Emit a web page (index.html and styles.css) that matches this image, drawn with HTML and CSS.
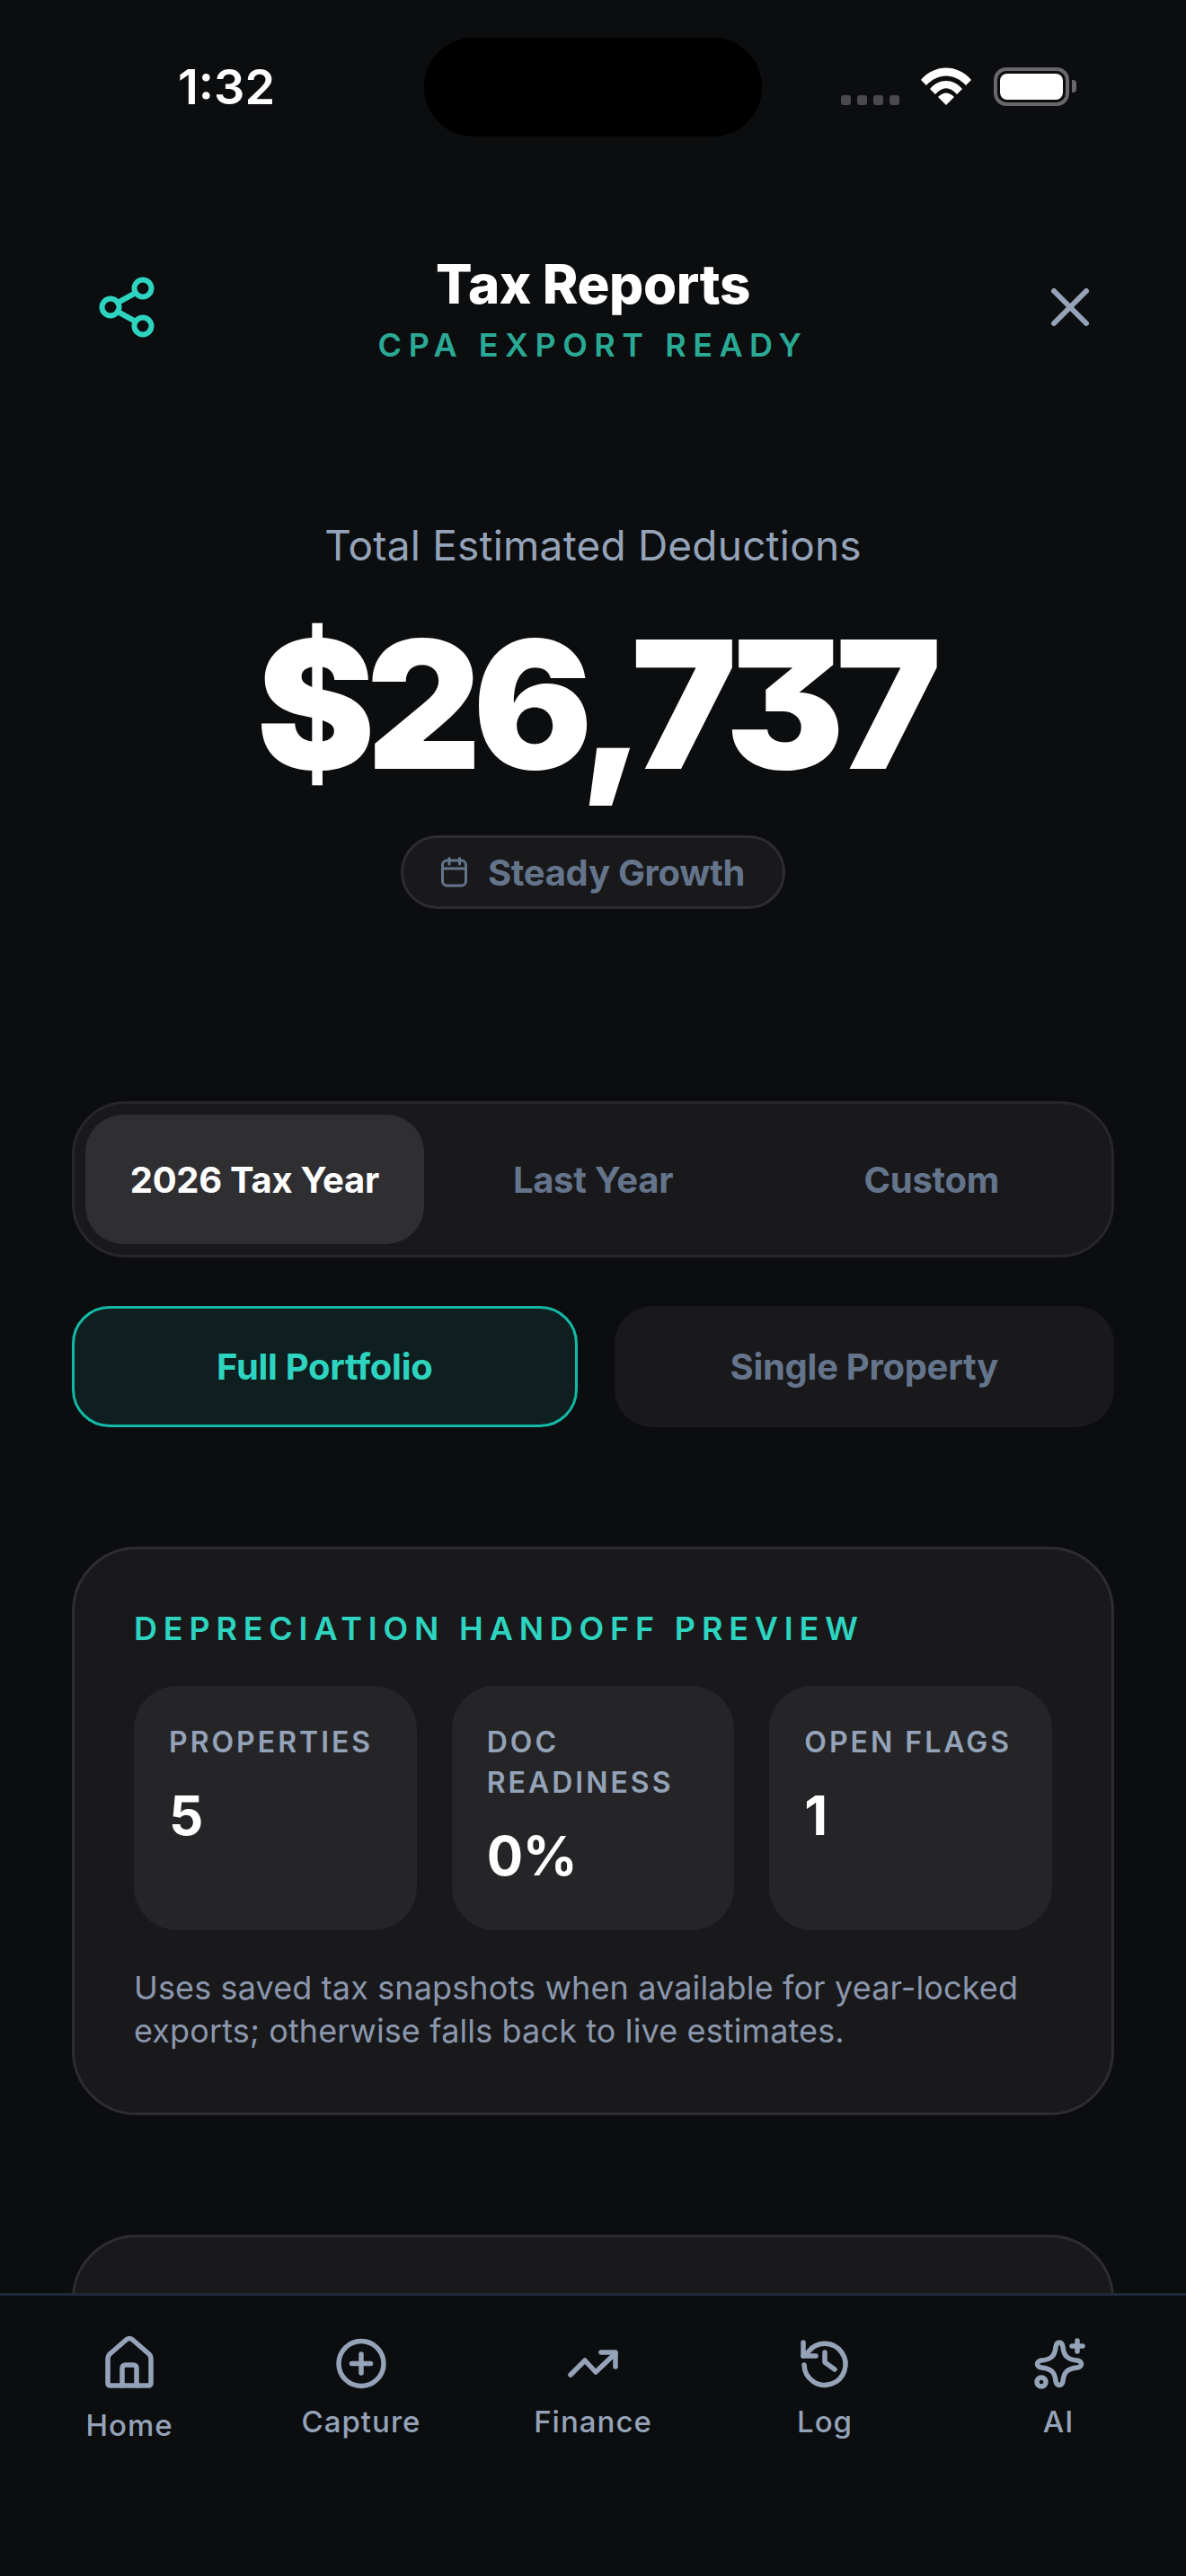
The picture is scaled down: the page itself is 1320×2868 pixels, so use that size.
FILE: index.html
```html
<!DOCTYPE html>
<html lang="en">

<head>
    <meta charset="UTF-8">
    <meta name="viewport" content="width=device-width, initial-scale=1.0">
    <title>Tax Reports</title>
    <link rel="stylesheet" href="styles.css">
</head>

<body>

    <div class="phone">
        <div class="status">
            <span class="time">1:32</span>
            <div class="island"></div>
            <div class="status-icons">
                <div class="signal"><i></i><i></i><i></i><i></i></div>
                <svg class="wifi" width="58" height="42" viewBox="0 0 58 42">
                    <path d="M1 14 C16 -4 42 -4 57 14 L51 20 C38 6 20 6 7 20 Z" />
                    <path d="M11 24 C21 12 37 12 47 24 L41 30 C33 21 25 21 17 30 Z" />
                    <path d="M20 33 C26 27 32 27 38 33 L29 42 Z" />
                </svg>
                <div class="battery"><div class="battery-fill"></div></div>
                <div class="battery-cap"></div>
            </div>
        </div>

        <div class="content">
            <div class="topbar">
                <svg class="share" width="72" height="72" viewBox="0 0 72 72" fill="none">
                    <circle cx="54" cy="15" r="9.5" />
                    <circle cx="18" cy="36" r="9.5" />
                    <circle cx="54" cy="57" r="9.5" />
                    <path d="M26 31 L46 20 M26 41 L46 52" />
                </svg>
                <div class="titles">
                    <h1>Tax Reports</h1>
                    <p>CPA EXPORT READY</p>
                </div>
                <svg class="close" width="48" height="48" viewBox="0 0 48 48" fill="none">
                    <path d="M6 6 L42 42 M42 6 L6 42" />
                </svg>
            </div>

            <div class="hero">
                <p class="hero-label">Total Estimated Deductions</p>
                <div class="hero-value">$26,737</div>
                <div class="pill">
                    <svg width="30" height="34" viewBox="0 0 30 34" fill="none">
                        <rect x="1.5" y="4" width="26" height="28" rx="5" />
                        <path d="M1.5 13 H27.5 M9 1.5 V8 M20.5 1.5 V8" />
                    </svg>
                    <span>Steady Growth</span>
                </div>
            </div>

            <div class="years">
                <div class="year active">2026 Tax Year</div>
                <div class="year">Last Year</div>
                <div class="year">Custom</div>
            </div>

            <div class="scope">
                <div class="scope-btn active">Full Portfolio</div>
                <div class="scope-btn">Single Property</div>
            </div>

            <div class="card">
                <h2>DEPRECIATION HANDOFF PREVIEW</h2>
                <div class="stats">
                    <div class="stat">
                        <div class="stat-label">PROPERTIES</div>
                        <div class="stat-value">5</div>
                    </div>
                    <div class="stat">
                        <div class="stat-label">DOC READINESS</div>
                        <div class="stat-value">0%</div>
                    </div>
                    <div class="stat">
                        <div class="stat-label">OPEN FLAGS</div>
                        <div class="stat-value">1</div>
                    </div>
                </div>
                <p class="note">Uses saved tax snapshots when available for year-locked exports; otherwise falls back to live estimates.</p>
            </div>

            <div class="card next"></div>
        </div>

        <div class="nav">
            <div class="nav-item home">
                <svg width="72" height="72" viewBox="0 0 72 72" fill="none">
                    <path d="M12 31 Q12 28 14 26 L33 9.5 Q36 7.5 39 9.5 L58 26 Q60 28 60 31 V58 Q60 61 57 61 H15 Q12 61 12 58 Z" />
                    <path d="M28 61 V42 Q28 38 32 38 H40 Q44 38 44 42 V61" />
                </svg>
                <span>Home</span>
            </div>
            <div class="nav-item">
                <svg width="72" height="72" viewBox="0 0 72 72" fill="none">
                    <circle cx="36" cy="36.5" r="25" />
                    <path d="M36 26 V47 M25.5 36.5 H46.5" />
                </svg>
                <span>Capture</span>
            </div>
            <div class="nav-item">
                <svg width="72" height="72" viewBox="0 0 72 72" fill="none">
                    <path d="M11 49 L27 33 L39 46 L61 25" />
                    <path d="M45 24 H61 V40" />
                </svg>
                <span>Finance</span>
            </div>
            <div class="nav-item">
                <svg width="72" height="72" viewBox="0 0 72 72" fill="none">
                    <path d="M13 38 A23 23 0 1 0 18 23 L12 28" />
                    <path d="M12 13 V28 H26" />
                    <path d="M36 24 V35 L47 43" />
                </svg>
                <span>Log</span>
            </div>
            <div class="nav-item ai">
                <svg width="72" height="72" viewBox="0 0 72 72" fill="none">
                    <path d="M37 13 C39.5 13 40.5 15 41 18 C42 28 46 32 57 33 C63 33.5 63 40.5 57 41 C46 42 42 46 41 56 C40.5 62 33.5 62 33 56 C32 46 28 42 17 41 C11 40.5 11 33.5 17 33 C28 32 32 28 33 18 C33.5 15 34.5 13 37 13 Z" />
                    <path d="M57 11 V23 M51 17 H63" />
                    <circle cx="17" cy="57" r="5" />
                </svg>
                <span>AI</span>
            </div>
        </div>
    </div>

</body>

</html>
```

FILE: styles.css
```css
* {
    margin: 0;
    padding: 0;
    box-sizing: border-box;
}

body {
    background-color: #0c0d0f;
    color: #fff;
    font-family: Inter, "Noto Sans", sans-serif;
}

.phone {
    width: 1320px;
    height: 2868px;
    display: flex;
    flex-direction: column;
    overflow: hidden;
}

/* status bar */
.status {
    height: 152px;
    padding-top: 42px;
    position: relative;
    display: flex;
    justify-content: space-between;
    flex-shrink: 0;
}

.time {
    width: 504px;
    text-align: center;
    font-size: 54px;
    font-weight: 600;
    line-height: 110px;
}

.island {
    width: 376px;
    height: 110px;
    background: #000;
    border-radius: 55px;
    position: absolute;
    left: 472px;
    top: 42px;
}

.status-icons {
    display: flex;
    align-items: flex-end;
    height: 43px;
    margin-right: 122px;
    margin-top: 33px;
}

.signal {
    display: flex;
    gap: 7px;
    margin-right: 23px;
    margin-bottom: 1px;
}

.signal i {
    width: 11px;
    height: 11px;
    border-radius: 3px;
    background: #4a4a4c;
}

.wifi {
    fill: #fff;
    margin-right: 24px;
    margin-bottom: 1px;
}

.battery {
    width: 84px;
    height: 43px;
    border: 4px solid #68686a;
    border-radius: 14px;
    padding: 3px;
}

.battery-fill {
    height: 100%;
    background: #fff;
    border-radius: 8px;
}

.battery-cap {
    width: 5px;
    height: 14px;
    background: #68686a;
    border-radius: 0 4px 4px 0;
    margin: 0 0 15px 3px;
}

/* page */
.content {
    flex: 1;
    min-height: 0;
    overflow: hidden;
    padding: 0 80px;
}

.topbar {
    display: grid;
    grid-template-columns: 1fr auto 1fr;
    margin-top: 128px;
}

.share {
    stroke: #2dd4bf;
    stroke-width: 6;
    stroke-linecap: round;
    margin: 26px 0 0 25px;
}

.close {
    stroke: #94a3b8;
    stroke-width: 6;
    stroke-linecap: round;
    margin: 38px 25px 0 0;
    justify-self: end;
}

.titles {
    text-align: center;
}

.titles h1 {
    font-size: 60px;
    font-weight: 800;
    line-height: 72px;
    letter-spacing: -.4px;
}

.titles p {
    font-size: 36px;
    font-weight: 600;
    line-height: 48px;
    letter-spacing: 7.5px;
    color: #2aa995;
    margin-top: 8px;
}

.hero {
    display: flex;
    flex-direction: column;
    align-items: center;
    margin-top: 171px;
}

.hero-label {
    font-size: 46px;
    line-height: 56px;
    color: #94a3b8;
    letter-spacing: .2px;
}

.hero-value {
    font-size: 198px;
    font-weight: 900;
    font-feature-settings: "cv09";
    line-height: 240px;
    letter-spacing: -9.5px;
    margin: 29px 0 0 4px;
}

.pill {
    height: 82px;
    padding: 0 42px;
    border: 3px solid #2d2d30;
    border-radius: 41px;
    background: #19191b;
    display: flex;
    align-items: center;
    gap: 22px;
    color: #64748b;
    font-size: 40px;
    font-weight: 700;
    letter-spacing: -.3px;
    margin-top: 26px;
}

.pill svg {
    stroke: #64748b;
    stroke-width: 3;
    stroke-linecap: round;
}

.years {
    height: 174px;
    margin-top: 214px;
    padding: 12px;
    display: flex;
    background: #19191b;
    border: 3px solid #27272a;
    border-radius: 60px;
}

.year {
    flex: 1;
    display: flex;
    align-items: center;
    justify-content: center;
    font-size: 40px;
    font-weight: 700;
    letter-spacing: -.3px;
    color: #64748b;
    border-radius: 42px;
}

.year.active {
    background: #2f2f32;
    color: #fff;
}

.scope {
    display: flex;
    gap: 41px;
    margin-top: 54px;
}

.scope-btn {
    flex: 1;
    height: 135px;
    display: flex;
    align-items: center;
    justify-content: center;
    font-size: 40px;
    font-weight: 700;
    letter-spacing: -.3px;
    color: #64748b;
    background: #19191b;
    border-radius: 42px;
}

.scope-btn.active {
    color: #2dd4bf;
    background: #0f1e1f;
    border: 3px solid #14b8a6;
}

.card {
    margin-top: 133px;
    padding: 66px 66px 0;
    height: 633px;
    background: #19191b;
    border: 3px solid #2d2d30;
    border-radius: 72px;
}

.card h2 {
    font-size: 36px;
    font-weight: 600;
    line-height: 44px;
    letter-spacing: 6.8px;
    color: #2dd4bf;
}

.stats {
    display: flex;
    gap: 39px;
    margin-top: 42px;
}

.stat {
    flex: 1;
    height: 272px;
    padding: 40px 39px 0;
    background: #252528;
    border-radius: 48px;
}

.stat-label {
    font-size: 32px;
    font-weight: 600;
    line-height: 45px;
    letter-spacing: 3px;
    color: #94a3b8;
}

.stat-value {
    font-size: 60px;
    font-weight: 700;
    letter-spacing: -.5px;
    line-height: 72px;
    margin-top: 23px;
}

.note {
    font-size: 36px;
    line-height: 48px;
    letter-spacing: .13px;
    color: #8b97ad;
    margin-top: 40px;
}

/* bottom nav */
.nav {
    height: 315px;
    flex-shrink: 0;
    padding: 39px 15px 0;
    display: flex;
    background: #0c0d0f;
    border-top: 3px solid #1e293b;
}

.nav-item {
    flex: 0 0 258px;
    display: flex;
    flex-direction: column;
    align-items: center;
    color: #94a3b8;
    font-size: 33px;
    font-weight: 500;
    letter-spacing: 1px;
}

.nav-item svg {
    stroke: #94a3b8;
    stroke-width: 5.5;
    stroke-linecap: round;
    stroke-linejoin: round;
}

.nav-item span {
    margin-top: 9px;
}

.nav-item.home span {
    margin-top: 13px;
}

.nav-item.ai {
    margin-left: 2px;
}
```
